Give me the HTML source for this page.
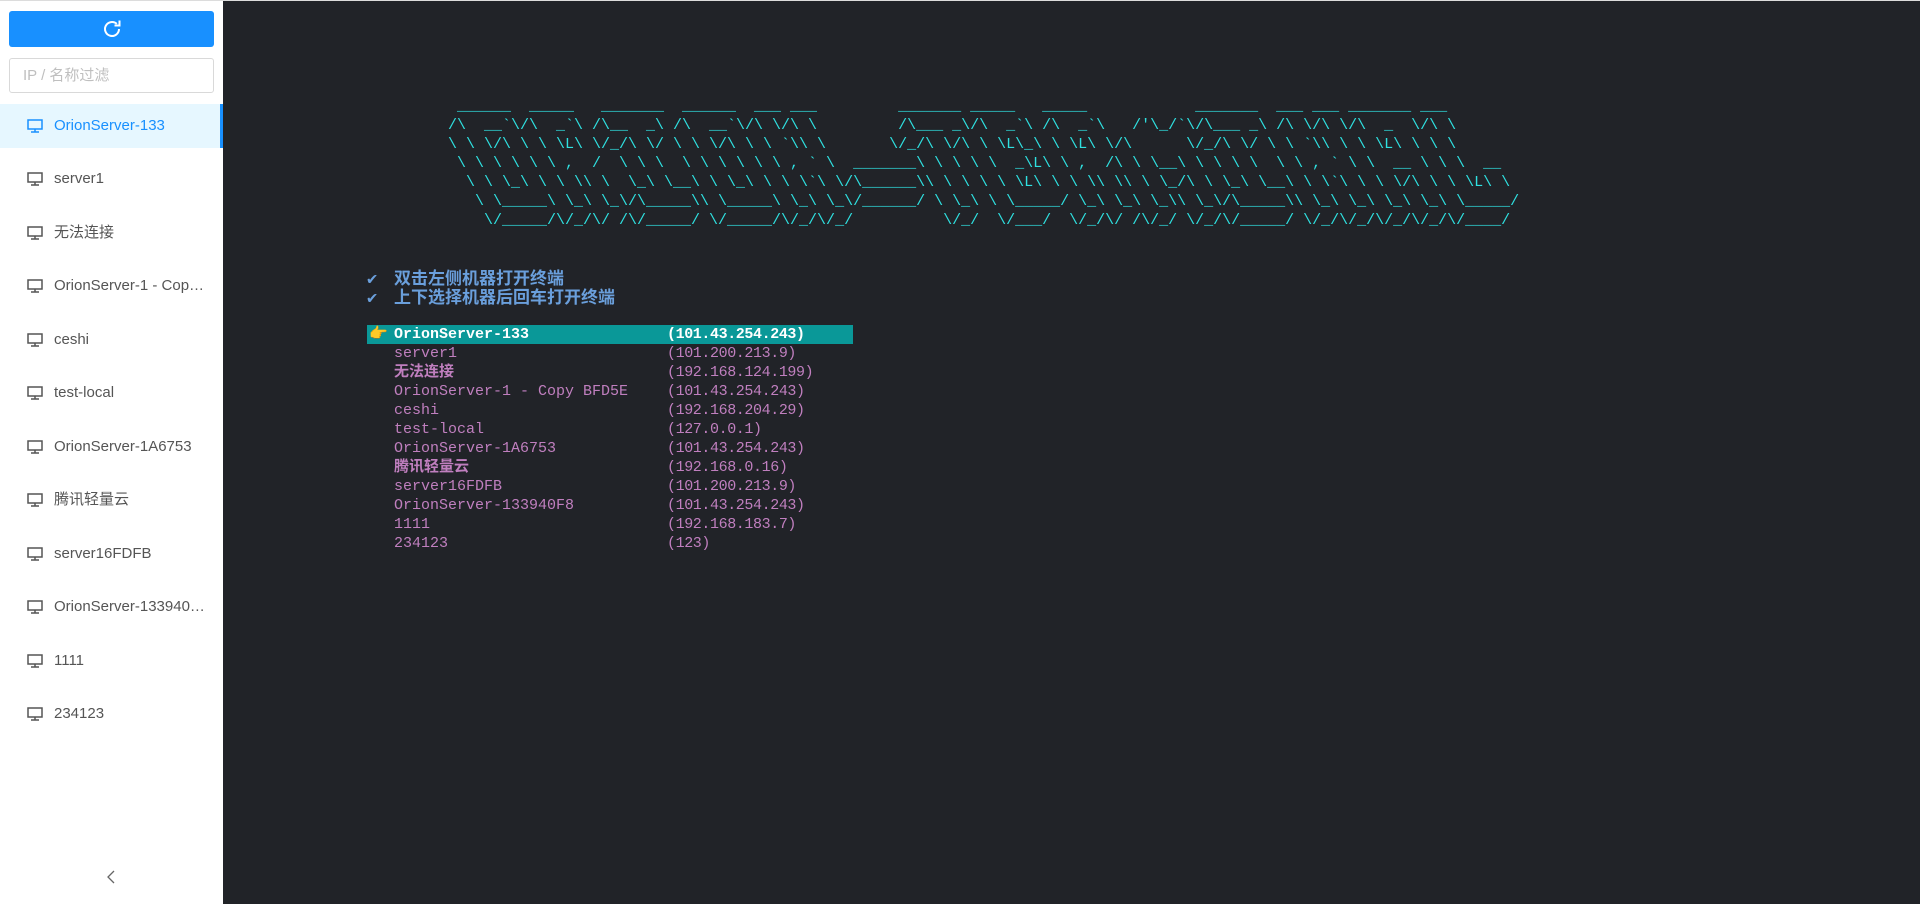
<!DOCTYPE html>
<html><head><meta charset="utf-8"><style>
*{margin:0;padding:0;box-sizing:border-box}
body{width:1920px;height:904px;overflow:hidden;background:#212328;font-family:"Liberation Sans","Noto Sans CJK SC",sans-serif;position:relative}
#top{position:absolute;left:0;top:0;width:1920px;height:1px;background:#dcdcdc}
#side{position:absolute;left:0;top:1px;width:223px;height:903px;background:#fff}
#btn{position:absolute;left:9px;top:10px;width:205px;height:36px;background:#1890ff;border-radius:3px}
#inp{position:absolute;left:9px;top:57px;width:205px;height:35px;border:1px solid #d9d9d9;border-radius:3px;font-size:15px;color:#bfbfbf;padding:8px 13px;line-height:18px}
.it{position:absolute;left:0;width:223px;height:44px;font-size:15px;color:#555;line-height:44px;padding-left:54px;padding-right:18px;white-space:nowrap;overflow:hidden;text-overflow:ellipsis}
.it svg{position:absolute;left:27px;top:15px}
.act{background:#e6f7ff;color:#1890ff;border-right:3px solid #1890ff}
#term{position:absolute;left:223px;top:1px;width:1697px;height:903px;background:#212328}
pre{position:absolute;font-family:"Liberation Mono",monospace;font-size:15px;line-height:19px;margin:0}
#art{left:225px;top:96px;color:#2fe0e0}
.h{position:absolute;left:144px;font-size:17px;font-weight:bold;color:#6a9fdc;font-family:"Liberation Mono","Noto Sans CJK SC",monospace}
.h b{display:inline-block;width:27px}
.r{position:absolute;left:144px;width:486px;height:19px;font-family:"Liberation Mono","Noto Sans CJK SC",monospace;font-size:15px;line-height:19px;color:#c07fbf;white-space:pre}
.r .n{position:absolute;left:27px}
.r .ip{position:absolute;left:300px;letter-spacing:-0.4px}
.sel{background:#0a9898;color:#fff;font-weight:bold}
</style></head><body>
<div id="top"></div>
<div id="side">
<div id="btn"><svg width="24" height="24" viewBox="0 0 24 24" style="position:absolute;left:91px;top:6px"><path d="M19 12a7 7 0 1 1-2.2-5.1" fill="none" stroke="#fff" stroke-width="2"/><path d="M19.5 3.5v5h-5" fill="none" stroke="#fff" stroke-width="2"/></svg></div>
<div id="inp">IP / 名称过滤</div>
<div class="it act" style="top:103px"><svg width="16" height="14" viewBox="0 0 16 14"><rect x="1" y="1" width="14" height="9" fill="none" stroke="#1890ff" stroke-width="1.5"/><path d="M8 10v3M4 13h8" stroke="#1890ff" stroke-width="1.5"/></svg>OrionServer-133</div>
<div class="it" style="top:156px"><svg width="16" height="14" viewBox="0 0 16 14"><rect x="1" y="1" width="14" height="9" fill="none" stroke="#555" stroke-width="1.5"/><path d="M8 10v3M4 13h8" stroke="#555" stroke-width="1.5"/></svg>server1</div>
<div class="it" style="top:210px"><svg width="16" height="14" viewBox="0 0 16 14"><rect x="1" y="1" width="14" height="9" fill="none" stroke="#555" stroke-width="1.5"/><path d="M8 10v3M4 13h8" stroke="#555" stroke-width="1.5"/></svg>无法连接</div>
<div class="it" style="top:263px"><svg width="16" height="14" viewBox="0 0 16 14"><rect x="1" y="1" width="14" height="9" fill="none" stroke="#555" stroke-width="1.5"/><path d="M8 10v3M4 13h8" stroke="#555" stroke-width="1.5"/></svg>OrionServer-1 - Copy BFD5E</div>
<div class="it" style="top:317px"><svg width="16" height="14" viewBox="0 0 16 14"><rect x="1" y="1" width="14" height="9" fill="none" stroke="#555" stroke-width="1.5"/><path d="M8 10v3M4 13h8" stroke="#555" stroke-width="1.5"/></svg>ceshi</div>
<div class="it" style="top:370px"><svg width="16" height="14" viewBox="0 0 16 14"><rect x="1" y="1" width="14" height="9" fill="none" stroke="#555" stroke-width="1.5"/><path d="M8 10v3M4 13h8" stroke="#555" stroke-width="1.5"/></svg>test-local</div>
<div class="it" style="top:424px"><svg width="16" height="14" viewBox="0 0 16 14"><rect x="1" y="1" width="14" height="9" fill="none" stroke="#555" stroke-width="1.5"/><path d="M8 10v3M4 13h8" stroke="#555" stroke-width="1.5"/></svg>OrionServer-1A6753</div>
<div class="it" style="top:477px"><svg width="16" height="14" viewBox="0 0 16 14"><rect x="1" y="1" width="14" height="9" fill="none" stroke="#555" stroke-width="1.5"/><path d="M8 10v3M4 13h8" stroke="#555" stroke-width="1.5"/></svg>腾讯轻量云</div>
<div class="it" style="top:531px"><svg width="16" height="14" viewBox="0 0 16 14"><rect x="1" y="1" width="14" height="9" fill="none" stroke="#555" stroke-width="1.5"/><path d="M8 10v3M4 13h8" stroke="#555" stroke-width="1.5"/></svg>server16FDFB</div>
<div class="it" style="top:584px"><svg width="16" height="14" viewBox="0 0 16 14"><rect x="1" y="1" width="14" height="9" fill="none" stroke="#555" stroke-width="1.5"/><path d="M8 10v3M4 13h8" stroke="#555" stroke-width="1.5"/></svg>OrionServer-133940F8</div>
<div class="it" style="top:638px"><svg width="16" height="14" viewBox="0 0 16 14"><rect x="1" y="1" width="14" height="9" fill="none" stroke="#555" stroke-width="1.5"/><path d="M8 10v3M4 13h8" stroke="#555" stroke-width="1.5"/></svg>1111</div>
<div class="it" style="top:691px"><svg width="16" height="14" viewBox="0 0 16 14"><rect x="1" y="1" width="14" height="9" fill="none" stroke="#555" stroke-width="1.5"/><path d="M8 10v3M4 13h8" stroke="#555" stroke-width="1.5"/></svg>234123</div>
<svg width="12" height="14" viewBox="0 0 12 14" style="position:absolute;left:105px;top:869px"><path d="M9 1L3 7l6 6" fill="none" stroke="#666" stroke-width="1.3"/></svg>
</div>
<div id="term">
<pre id="art"> ______  _____   _______  ______  ___ ___         _______ _____   _____            _______  ___ ___ _______ ___
/\  __`\/\  _`\ /\__  _\ /\  __`\/\ \/\ \         /\___ _\/\  _`\ /\  _`\   /'\_/`\/\___ _\ /\ \/\ \/\  _  \/\ \
\ \ \/\ \ \ \L\ \/_/\ \/ \ \ \/\ \ \ `\\ \       \/_/\ \/\ \ \L\_\ \ \L\ \/\      \/_/\ \/ \ \ `\\ \ \ \L\ \ \ \
 \ \ \ \ \ \ ,  /  \ \ \  \ \ \ \ \ \ , ` \  _______\ \ \ \ \  _\L\ \ ,  /\ \ \__\ \ \ \ \  \ \ , ` \ \  __ \ \ \  __
  \ \ \_\ \ \ \\ \  \_\ \__\ \ \_\ \ \ \`\ \/\______\\ \ \ \ \ \L\ \ \ \\ \\ \ \_/\ \ \_\ \__\ \ \`\ \ \ \/\ \ \ \L\ \
   \ \_____\ \_\ \_\/\_____\\ \_____\ \_\ \_\/______/ \ \_\ \ \_____/ \_\ \_\ \_\\ \_\/\_____\\ \_\ \_\ \_\ \_\ \_____/
    \/_____/\/_/\/ /\/_____/ \/_____/\/_/\/_/          \/_/  \/___/  \/_/\/ /\/_/ \/_/\/_____/ \/_/\/_/\/_/\/_/\/____/</pre>
<div class="h" style="top:263px"><b>✔</b>双击左侧机器打开终端</div>
<div class="h" style="top:282px"><b>✔</b>上下选择机器后回车打开终端</div>
<div class="r sel" style="top:324px"><span style="position:absolute;left:2px;color:#f5b400">👉</span><span class="n">OrionServer-133</span><span class="ip">(101.43.254.243)</span></div>
<div class="r" style="top:343px"><span class="n">server1</span><span class="ip">(101.200.213.9)</span></div>
<div class="r" style="top:362px;font-weight:bold"><span class="n">无法连接</span><span class="ip" style="font-weight:normal">(192.168.124.199)</span></div>
<div class="r" style="top:381px"><span class="n">OrionServer-1 - Copy BFD5E</span><span class="ip">(101.43.254.243)</span></div>
<div class="r" style="top:400px"><span class="n">ceshi</span><span class="ip">(192.168.204.29)</span></div>
<div class="r" style="top:419px"><span class="n">test-local</span><span class="ip">(127.0.0.1)</span></div>
<div class="r" style="top:438px"><span class="n">OrionServer-1A6753</span><span class="ip">(101.43.254.243)</span></div>
<div class="r" style="top:457px;font-weight:bold"><span class="n">腾讯轻量云</span><span class="ip" style="font-weight:normal">(192.168.0.16)</span></div>
<div class="r" style="top:476px"><span class="n">server16FDFB</span><span class="ip">(101.200.213.9)</span></div>
<div class="r" style="top:495px"><span class="n">OrionServer-133940F8</span><span class="ip">(101.43.254.243)</span></div>
<div class="r" style="top:514px"><span class="n">1111</span><span class="ip">(192.168.183.7)</span></div>
<div class="r" style="top:533px"><span class="n">234123</span><span class="ip">(123)</span></div>
</div>
</body></html>
